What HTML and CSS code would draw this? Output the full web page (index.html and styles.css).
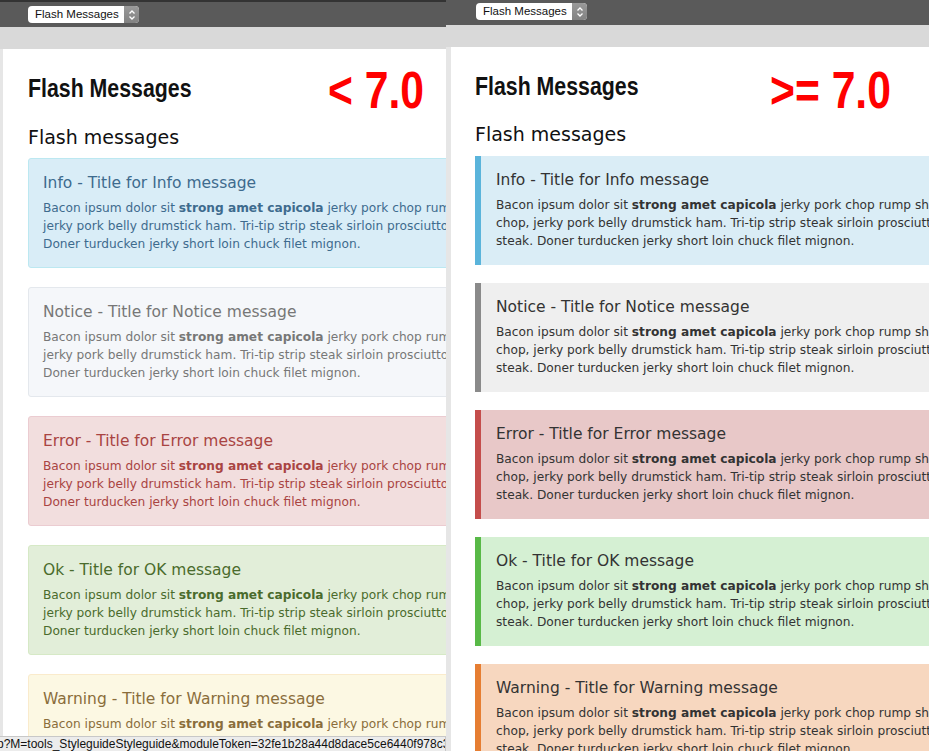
FILE: index.html
```html
<!DOCTYPE html>
<html>
<head>
<meta charset="utf-8">
<link rel="stylesheet" href="styles.css">
</head>
<body>
<div class="compare">
  <section class="pane pane-old">
    <div class="topbar">
      <div class="picker">
        <span class="picker-label">Flash Messages</span>
        <span class="picker-step"><svg width="8" height="12" viewBox="0 0 8 12"><path d="M1.5 4.5 L4 2 L6.5 4.5 M1.5 7.5 L4 10 L6.5 7.5" fill="none" stroke="#fff" stroke-width="1.3"/></svg></span>
      </div>
    </div>
    <div class="graybar"></div>
    <div class="page">
      <div class="header">
        <h1 class="title"><span class="narrow">Flash Messages</span></h1>
        <div class="version"><span class="narrow">&lt; 7.0</span></div>
      </div>
      <h2 class="subtitle">Flash messages</h2>
      <div class="msg msg-info">
        <h3 class="msg-title">Info - Title for Info message</h3>
        <p class="msg-body">Bacon ipsum dolor sit <strong>strong amet capicola</strong> jerky pork chop rump shoulder. Pork chop,<br>jerky pork belly drumstick ham. Tri-tip strip steak sirloin prosciutto, t-bone steak.<br>Doner turducken jerky short loin chuck filet mignon.</p>
      </div>
      <div class="msg msg-notice">
        <h3 class="msg-title">Notice - Title for Notice message</h3>
        <p class="msg-body">Bacon ipsum dolor sit <strong>strong amet capicola</strong> jerky pork chop rump shoulder. Pork chop,<br>jerky pork belly drumstick ham. Tri-tip strip steak sirloin prosciutto, t-bone steak.<br>Doner turducken jerky short loin chuck filet mignon.</p>
      </div>
      <div class="msg msg-error">
        <h3 class="msg-title">Error - Title for Error message</h3>
        <p class="msg-body">Bacon ipsum dolor sit <strong>strong amet capicola</strong> jerky pork chop rump shoulder. Pork chop,<br>jerky pork belly drumstick ham. Tri-tip strip steak sirloin prosciutto, t-bone steak.<br>Doner turducken jerky short loin chuck filet mignon.</p>
      </div>
      <div class="msg msg-ok">
        <h3 class="msg-title">Ok - Title for OK message</h3>
        <p class="msg-body">Bacon ipsum dolor sit <strong>strong amet capicola</strong> jerky pork chop rump shoulder. Pork chop,<br>jerky pork belly drumstick ham. Tri-tip strip steak sirloin prosciutto, t-bone steak.<br>Doner turducken jerky short loin chuck filet mignon.</p>
      </div>
      <div class="msg msg-warning">
        <h3 class="msg-title">Warning - Title for Warning message</h3>
        <p class="msg-body">Bacon ipsum dolor sit <strong>strong amet capicola</strong> jerky pork chop rump shoulder. Pork chop,<br>jerky pork belly drumstick ham. Tri-tip strip steak sirloin prosciutto, t-bone steak.<br>Doner turducken jerky short loin chuck filet mignon.</p>
      </div>
    </div>
    <div class="statusbar">p?M=tools_StyleguideStyleguide&amp;moduleToken=32fe1b28a44d8dace5ce6440f978c32</div>
  </section>
  <section class="pane pane-new">
    <div class="topbar">
      <div class="picker">
        <span class="picker-label">Flash Messages</span>
        <span class="picker-step"><svg width="8" height="12" viewBox="0 0 8 12"><path d="M1.5 4.5 L4 2 L6.5 4.5 M1.5 7.5 L4 10 L6.5 7.5" fill="none" stroke="#fff" stroke-width="1.3"/></svg></span>
      </div>
    </div>
    <div class="graybar"></div>
    <div class="page">
      <div class="header">
        <h1 class="title"><span class="narrow">Flash Messages</span></h1>
        <div class="version"><span class="narrow">&gt;= 7.0</span></div>
      </div>
      <h2 class="subtitle">Flash messages</h2>
      <div class="msg msg-info">
        <h3 class="msg-title">Info - Title for Info message</h3>
        <p class="msg-body">Bacon ipsum dolor sit <strong>strong amet capicola</strong> jerky pork chop rump shoulder. Pork<br>chop, jerky pork belly drumstick ham. Tri-tip strip steak sirloin prosciutto, t-bone<br>steak. Doner turducken jerky short loin chuck filet mignon.</p>
      </div>
      <div class="msg msg-notice">
        <h3 class="msg-title">Notice - Title for Notice message</h3>
        <p class="msg-body">Bacon ipsum dolor sit <strong>strong amet capicola</strong> jerky pork chop rump shoulder. Pork<br>chop, jerky pork belly drumstick ham. Tri-tip strip steak sirloin prosciutto, t-bone<br>steak. Doner turducken jerky short loin chuck filet mignon.</p>
      </div>
      <div class="msg msg-error">
        <h3 class="msg-title">Error - Title for Error message</h3>
        <p class="msg-body">Bacon ipsum dolor sit <strong>strong amet capicola</strong> jerky pork chop rump shoulder. Pork<br>chop, jerky pork belly drumstick ham. Tri-tip strip steak sirloin prosciutto, t-bone<br>steak. Doner turducken jerky short loin chuck filet mignon.</p>
      </div>
      <div class="msg msg-ok">
        <h3 class="msg-title">Ok - Title for OK message</h3>
        <p class="msg-body">Bacon ipsum dolor sit <strong>strong amet capicola</strong> jerky pork chop rump shoulder. Pork<br>chop, jerky pork belly drumstick ham. Tri-tip strip steak sirloin prosciutto, t-bone<br>steak. Doner turducken jerky short loin chuck filet mignon.</p>
      </div>
      <div class="msg msg-warning">
        <h3 class="msg-title">Warning - Title for Warning message</h3>
        <p class="msg-body">Bacon ipsum dolor sit <strong>strong amet capicola</strong> jerky pork chop rump shoulder. Pork<br>chop, jerky pork belly drumstick ham. Tri-tip strip steak sirloin prosciutto, t-bone<br>steak. Doner turducken jerky short loin chuck filet mignon.</p>
      </div>
    </div>
  </section>
</div>
</body>
</html>
```
FILE: styles.css
```css
* { box-sizing: border-box; }
html, body { margin: 0; padding: 0; }
body {
  width: 929px;
  height: 751px;
  overflow: hidden;
  background: #e6e6e6;
  font-family: "DejaVu Sans", Verdana, sans-serif;
}
.compare {
  display: flex;
  width: 929px;
  height: 751px;
}
.pane {
  position: relative;
  height: 751px;
  overflow: hidden;
  display: flex;
  flex-direction: column;
}
.pane-old { width: 446px; flex: none; }
.pane-new { flex: 1; }

.topbar {
  background: #5a5a5a;
  display: flex;
  align-items: flex-start;
  flex: none;
}
.pane-old .topbar {
  height: 27px;
  border-top: 2px solid #333;
  padding: 4px 0 0 28px;
}
.pane-new .topbar {
  height: 25px;
  padding: 3px 0 0 30px;
}
.picker {
  display: flex;
  height: 17px;
  width: 111px;
  background: #fff;
  border-radius: 4px;
  overflow: hidden;
  align-items: stretch;
}
.picker-label {
  flex: 1;
  font-family: "Liberation Sans", Arial, sans-serif;
  font-size: 11.5px;
  line-height: 17px;
  color: #111;
  padding-left: 7px;
}
.picker-step {
  width: 15px;
  background: linear-gradient(#9a9a9a, #828282);
  display: flex;
  align-items: center;
  justify-content: center;
}
.graybar {
  background: #d9d9d9;
  flex: none;
  height: 22px;
}

.page {
  flex: 1;
  background: #fff;
  overflow: hidden;
}
.pane-old .page {
  margin-left: 3px;
  padding: 15px 0 0 25px;
}
.pane-new .page {
  margin-left: 5px;
  padding: 17px 0 0 24px;
}

.header {
  display: grid;
  align-items: start;
}
.pane-old .header { grid-template-columns: 300px auto; }
.pane-new .header { grid-template-columns: 295px auto; }
.narrow {
  display: inline-block;
  transform: scaleX(0.82);
  transform-origin: left center;
  white-space: nowrap;
}
.title {
  margin: 9px 0 0 0;
  font-family: "Liberation Sans", Arial, sans-serif;
  font-weight: bold;
  font-size: 26px;
  line-height: 30px;
  color: #111;
  white-space: nowrap;
}
.pane-new .title { margin-top: 7px; }
.version {
  font-family: "Liberation Sans", Arial, sans-serif;
  font-weight: bold;
  font-size: 52px;
  line-height: 52px;
  color: #ff0000;
  white-space: nowrap;
}
.subtitle {
  margin: 9px 0 9px 0;
  font-weight: normal;
  font-size: 19px;
  line-height: 24px;
  color: #111;
}
.pane-new .subtitle { margin: 6px 0 10px 0; }

.msg {
  width: 700px;
  margin-bottom: 19px;
}
.pane-old .msg {
  border: 1px solid;
  border-radius: 3px;
  padding: 14px 14px 14px 14px;
}
.pane-new .msg {
  border-left: 6px solid;
  padding: 14px 15px 15px 15px;
  margin-bottom: 18px;
  color: #333;
}
.msg-title {
  margin: 0 0 6px 0;
  font-weight: normal;
  font-size: 15.5px;
  line-height: 20px;
}
.msg-body {
  margin: 0;
  font-size: 12.2px;
  line-height: 18px;
  white-space: nowrap;
}
.msg-body strong { font-weight: bold; }

.pane-old .msg-info { background: #d9edf7; border-color: #bce8f1; color: #3e6b8e; }
.pane-old .msg-notice { background: #f5f7fa; border-color: #e4e8ed; color: #777; }
.pane-old .msg-error { background: #f2dede; border-color: #ebccd1; color: #a94442; }
.pane-old .msg-ok { background: #e2eed9; border-color: #d6e9c6; color: #4a6b2c; }
.pane-old .msg-warning { background: #fcf8e3; border-color: #faebcc; color: #8a6d3b; }

.pane-new .msg-info { background: #daedf6; border-left-color: #5ab4db; }
.pane-new .msg-notice { background: #efefef; border-left-color: #8a8a8a; }
.pane-new .msg-error { background: #e8c8c8; border-left-color: #c44d4b; }
.pane-new .msg-ok { background: #d5f0d3; border-left-color: #58b947; }
.pane-new .msg-warning { background: #f7d7bf; border-left-color: #e67e32; }

.statusbar {
  position: absolute;
  left: 0;
  bottom: 0;
  width: 446px;
  height: 15px;
  background: #ececec;
  border-top: 1px solid #c8c8c8;
  border-right: 1px solid #c8c8c8;
  font-family: "Liberation Sans", Arial, sans-serif;
  font-size: 12px;
  line-height: 14px;
  color: #111;
  white-space: nowrap;
  overflow: hidden;
  text-indent: -3px;
}
```
